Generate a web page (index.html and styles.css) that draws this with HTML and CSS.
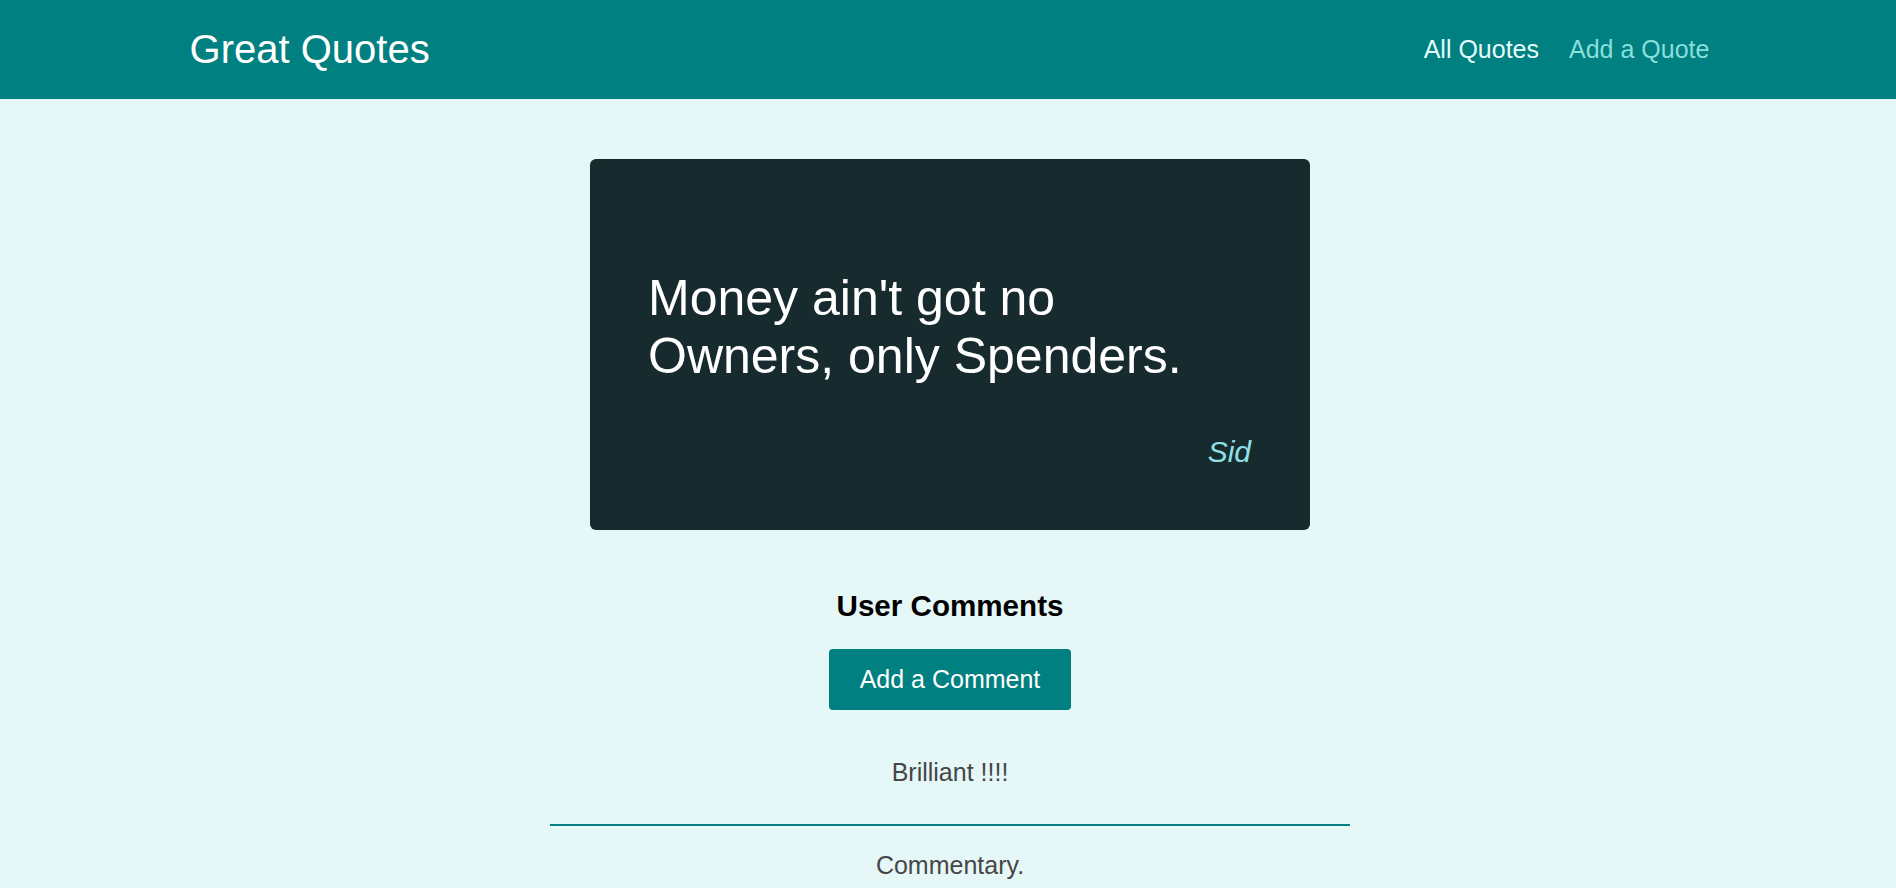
FILE: index.html
```html
<!DOCTYPE html>
<html lang="en">
<head>
<meta charset="utf-8">
<title>Great Quotes</title>
<link rel="stylesheet" href="styles.css">
</head>
<body>
<header class="header">
  <div class="logo">Great Quotes</div>
  <nav class="nav">
    <a class="nav-link active" href="#">All Quotes</a>
    <a class="nav-link" href="#">Add a Quote</a>
  </nav>
</header>
<main class="main">
  <figure class="quote">
    <p class="quote-text">Money ain't got no Owners, only Spenders.</p>
    <figcaption class="quote-author">Sid</figcaption>
  </figure>
  <section class="comments">
    <h2 class="comments-title">User Comments</h2>
    <button class="btn">Add a Comment</button>
    <ul class="comment-list">
      <li class="comment">Brilliant !!!!</li>
      <li class="comment">Commentary.</li>
    </ul>
  </section>
</main>
</body>
</html>
```

FILE: styles.css
```css
* { box-sizing: border-box; }

body {
  margin: 0;
  background: #e5f7f7;
  font-family: "Liberation Sans", Arial, sans-serif;
}

.header {
  height: 99px;
  background: #008080;
  display: flex;
  justify-content: space-between;
  align-items: center;
  padding: 0 calc(10% - 3px) 0 10%;
}

.logo {
  font-size: 40px;
  color: #ffffff;
}

.nav {
  display: flex;
  gap: 30px;
}

.nav-link {
  font-size: 25px;
  color: #88dfdc;
  text-decoration: none;
}

.nav-link.active {
  color: #e6fcfc;
}

.main {
  width: 800px;
  margin: 0 auto 0 calc(50% - 398px);
}

.quote {
  width: 90%;
  margin: 60px auto 0;
  background: #172a2d;
  border-radius: 6px;
  padding: 110px 59px 61px 58px;
}

.quote-text {
  margin: 0;
  font-size: 50px;
  color: #ffffff;
}

.quote-author {
  margin-top: 50px;
  text-align: right;
  font-style: italic;
  font-size: 30px;
  color: #8ee0e6;
}

.comments {
  text-align: center;
}

.comments-title {
  margin: 59px 0 0;
  font-size: 29.6px;
  font-weight: bold;
  color: #000;
}

.btn {
  margin-top: 26px;
  font-family: inherit;
  font-size: 25px;
  padding: 16px 31px;
  background: #008080;
  color: #ffffff;
  border: none;
  border-radius: 4px;
  cursor: pointer;
}

.comment-list {
  list-style: none;
  margin: 48px 0 0;
  padding: 0;
}

.comment {
  font-size: 25px;
  color: #464646;
  padding: 25px 0 37px;
  border-bottom: 2px solid #008080;
}

.comment:first-child {
  padding-top: 0;
}
```
